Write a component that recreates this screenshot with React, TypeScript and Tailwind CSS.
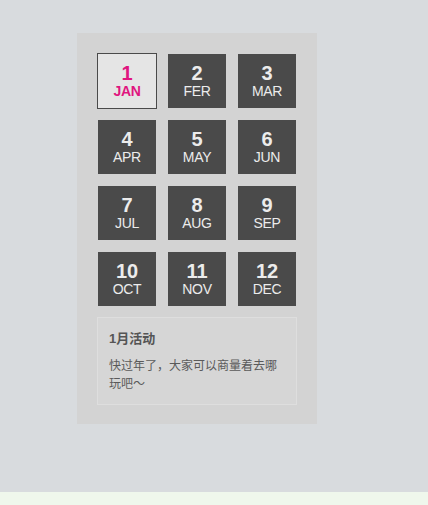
import React from 'react';

const months = [
  { n: 1, m: 'JAN' },
  { n: 2, m: 'FER' },
  { n: 3, m: 'MAR' },
  { n: 4, m: 'APR' },
  { n: 5, m: 'MAY' },
  { n: 6, m: 'JUN' },
  { n: 7, m: 'JUL' },
  { n: 8, m: 'AUG' },
  { n: 9, m: 'SEP' },
  { n: 10, m: 'OCT' },
  { n: 11, m: 'NOV' },
  { n: 12, m: 'DEC' },
];

const App: React.FC = () => {
  return (
    <div className="w-[428px] h-[505px] flex flex-col font-['Liberation_Sans','Noto_Sans_CJK_SC',sans-serif]">
      <div className="h-[492px] bg-[#d8dbde] pt-[33px] pl-[77px]">
        <div className="w-[240px] h-[391px] bg-[#d3d3d3] pt-[21px] pl-[21px]">
          <div className="grid grid-cols-[58px_58px_58px] gap-3">
            {months.map((item, i) => (
              <div
                key={item.n}
                className={
                  i === 0
                    ? 'h-[54px] flex flex-col items-center justify-center bg-[#e5e5e5] ring-1 ring-[#4a4a4a] text-[#e0157f]'
                    : 'h-[54px] flex flex-col items-center justify-center bg-[#4a4a4a] text-[#ececec]'
                }
              >
                <span className="text-[20px] font-bold leading-[20px]">{item.n}</span>
                <span className={i === 0 ? 'text-[14px] font-bold leading-[17px] tracking-[-0.3px]' : 'text-[14px] leading-[17px] tracking-[-0.3px]'}>
                  {item.m}
                </span>
              </div>
            ))}
          </div>
          <div className="mt-[11px] -ml-px w-[200px] h-[88px] border border-[#dedede] bg-[#d6d6d6] px-[11px] pt-[12px]">
            <div className="text-[13px] font-bold text-[#555] leading-[18px]">1月活动</div>
            <p className="mt-[9px] text-[12px] text-[#5a5a5a] leading-[18px]">
              快过年了，大家可以商量着去哪玩吧～
            </p>
          </div>
        </div>
      </div>
      <div className="flex-1 bg-[#eff7ec]" />
    </div>
  );
};

export default App;
